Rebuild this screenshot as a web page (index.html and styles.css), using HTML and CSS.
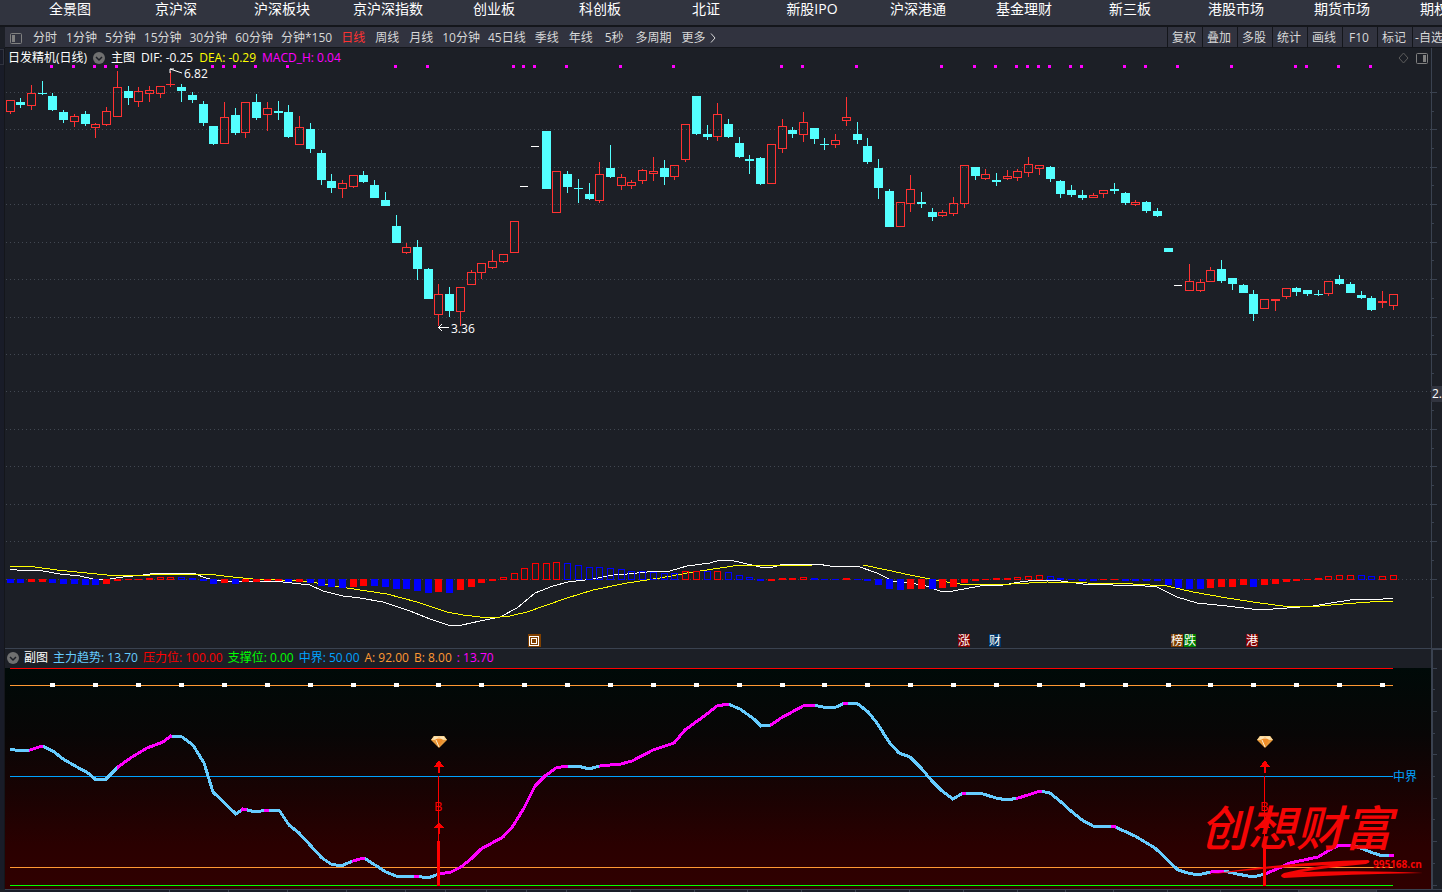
FILE: index.html
```html
<!DOCTYPE html>
<html lang="zh-CN">
<head>
    <meta charset="utf-8">
    <title>日发精机(日线)</title>
    <link rel="stylesheet" href="styles.css">
</head>
<body>
    <nav class="markets">
        <a href="#">全景图</a>
        <a href="#">京沪深</a>
        <a href="#">沪深板块</a>
        <a href="#">京沪深指数</a>
        <a href="#">创业板</a>
        <a href="#">科创板</a>
        <a href="#">北证</a>
        <a href="#">新股IPO</a>
        <a href="#">沪深港通</a>
        <a href="#">基金理财</a>
        <a href="#">新三板</a>
        <a href="#">港股市场</a>
        <a href="#">期货市场</a>
        <a href="#">期权市场</a>
    </nav>

    <div class="toolbar">
        <div class="periods">
            <button class="side-toggle" aria-label="侧栏">
                <svg width="12" height="11"><rect x="0.5" y="0.5" width="11" height="10" rx="1" fill="none" stroke="#808080"/><rect x="2" y="2" width="3" height="7" fill="#808080"/></svg>
            </button>
            <button class="unit">分时</button>
            <button>1分钟</button>
            <button>5分钟</button>
            <button>15分钟</button>
            <button>30分钟</button>
            <button>60分钟</button>
            <button>分钟*150</button>
            <button class="unit active">日线</button>
            <button class="unit">周线</button>
            <button class="unit">月线</button>
            <button>10分钟</button>
            <button>45日线</button>
            <button class="unit">季线</button>
            <button class="unit">年线</button>
            <button class="seconds">5秒</button>
            <button class="unit">多周期</button>
            <button class="unit more">更多
                <svg width="6" height="10"><path d="M1 0.5 L5 5 L1 9.5" fill="none" stroke="#d8d8d8"/></svg>
            </button>
        </div>
        <div class="tools">
            <button>复权</button>
            <button>叠加</button>
            <button>多股</button>
            <button>统计</button>
            <button>画线</button>
            <button>F10</button>
            <button>标记</button>
            <button>-自选</button>
        </div>
    </div>

    <main class="workspace">
        <div class="gutter"><div class="gutter-tab"></div></div>
        <div class="charts">
            <section class="price">
                <div class="legend">
                    <span class="name">日发精机(日线)</span>
                    <button class="fold" aria-label="主图菜单"><svg width="12" height="12"><circle cx="6" cy="6" r="6" fill="#707070"/><path d="M3 5 L6 8 L9 5" fill="none" stroke="#1c1f26" stroke-width="1.5"/></svg></button>
                    <span>主图</span>
                    <span>DIF: -0.25</span>
                    <span class="yellow">DEA: -0.29</span>
                    <span class="magenta">MACD_H: 0.04</span>
                    <span class="corner">
                        <svg width="30" height="12"><path d="M5.500 1 L10 6 L5.500 11 L1 6 Z" fill="none" stroke="#5c5c5c"/><rect x="18.500" y="1.500" width="11" height="10" rx="1" fill="none" stroke="#808080"/><rect x="25" y="3" width="3" height="7" fill="#808080"/></svg>
                    </span>
                </div>
                <svg id="priceChart" class="price-chart"></svg>
            </section>
            <section class="sub">
                <div class="legend">
                    <button class="fold" aria-label="副图菜单"><svg width="12" height="12"><circle cx="6" cy="6" r="6" fill="#707070"/><path d="M3 5 L6 8 L9 5" fill="none" stroke="#1c1f26" stroke-width="1.5"/></svg></button>
                    <span>副图</span>
                    <span class="sky">主力趋势: 13.70</span>
                    <span class="red">压力位: 100.00</span>
                    <span class="green">支撑位: 0.00</span>
                    <span class="blue">中界: 50.00</span>
                    <span class="orange">A: 92.00</span>
                    <span class="orange">B: 8.00</span>
                    <span class="magenta">: 13.70</span>
                </div>
                <svg id="trendChart" class="trend-chart"></svg>
            </section>
        </div>
        <div class="axis">
            <svg id="priceAxis" class="price-axis"></svg>
            <span class="price-tag">2.</span>
            <svg id="trendAxis" class="trend-axis"></svg>
        </div>
    </main>
    <footer class="timeline"><svg id="timeAxis" width="100%" height="3"></svg></footer>

    <script src="chart.js"></script>
</body>
</html>
```
FILE: styles.css
```css
* {
    box-sizing: border-box;
}

body {
    margin: 0;
    background-color: #1c1f26;
    color: #fff;
    font-family: "Open Sans", "Noto Sans CJK SC", sans-serif;
    font-size: 12px;
    line-height: 16px;
    overflow: hidden;
}

button {
    margin: 0;
    padding: 0;
    border: none;
    background: none;
    color: #d8d8d8;
    font: inherit;
    white-space: nowrap;
    cursor: pointer;
}

svg {
    display: block;
}

/* top market tabs */
.markets {
    display: flex;
    height: 27px;
    padding-left: 17px;
    background-color: #31343f;
    border-bottom: 2px solid #14161b;
    overflow: hidden;
}

.markets a {
    flex: 0 0 106px;
    color: #fff;
    font-size: 14px;
    line-height: 18px;
    text-align: center;
    text-decoration: none;
}

/* period toolbar */
.toolbar {
    display: flex;
    justify-content: space-between;
    height: 21px;
    margin-left: 5px;
    background-color: #31333f;
    border-bottom: 1px solid #14161b;
    overflow: hidden;
}

.periods {
    display: flex;
    align-items: center;
    gap: 8px;
    padding-top: 2px;
    padding-left: 5px;
}

.periods .side-toggle {
    margin-right: 2px;
}

.periods .unit {
    padding: 0 1px;
}

.periods .seconds {
    padding: 0 3px;
}

.periods .active {
    color: #ff3232;
}

.more {
    display: flex;
    align-items: center;
    gap: 4px;
}

.tools {
    display: flex;
    flex: 0 0 275px;
    overflow: hidden;
}

.tools button {
    flex: 0 0 35px;
    padding-top: 2px;
    padding-right: 2px;
    border-left: 1px solid #14161b;
}

/* charts */
.workspace {
    display: flex;
}

.gutter {
    flex: 0 0 5px;
    background-color: #191c28;
    border-right: 1px solid #14161b;
}

.gutter-tab {
    height: 16px;
    margin-top: 1px;
    border: 1px solid #31343f;
    border-left: none;
}

.charts {
    flex: 1;
    min-width: 0;
}

.legend {
    display: flex;
    align-items: center;
    gap: 6px;
    height: 16px;
    padding-left: 3px;
    white-space: nowrap;
}

.price .legend {
    padding-top: 3px;
}

.corner {
    margin-left: auto;
    padding-right: 3px;
}

.price-chart {
    width: 100%;
    height: 584px;
}

.sub {
    border-top: 1px solid #3a4250;
}

.sub .legend {
    height: 19px;
    padding-bottom: 2px;
    padding-left: 2px;
    gap: 5px;
}

.trend-chart {
    width: 100%;
    height: 221px;
    background: linear-gradient(#000a08, #080606 30%, #180303 55%, #2a0000 80%, #300000);
}

.axis {
    position: relative;
    flex: 0 0 11px;
    overflow: hidden;
}

.price-axis {
    width: 100%;
    height: 600px;
    border-left: 1px solid #3a4250;
}

.price-tag {
    position: absolute;
    top: 338px;
    left: 0;
    width: 100%;
    padding-left: 1px;
    background-color: #31343f;
}

.trend-axis {
    width: 100%;
    height: 241px;
    border-top: 2px solid #3a4250;
    border-left: 2px solid #3a4250;
}

.timeline {
    margin-left: 5px;
    border-top: 1px solid #3a4250;
    background-color: #191c28;
}

.yellow {
    color: #ffff00;
}

.magenta {
    color: #ff00ff;
}

.sky {
    color: #66ccff;
}

.red {
    color: #ff0000;
}

.green {
    color: #00ff00;
}

.blue {
    color: #00a2ff;
}

.orange {
    color: #ff9933;
}

/* svg text */
.mark {
    fill: #fff;
    font-size: 12px;
}

.mid-label {
    fill: #00a2ff;
    font-size: 12px;
}

.buy {
    fill: #ff0000;
    font-size: 13px;
}

.brand {
    fill: #f50505;
    font-family: "Noto Sans CJK SC", sans-serif;
    font-size: 48px;
    font-style: italic;
    font-weight: 500;
}

.site {
    fill: #f50505;
    font-size: 10px;
    font-weight: bold;
}
```
FILE: chart.js
```js
// one row per day: kind (r up, c down, w flat), high, top, bottom, low
const candles = `r 100 100 112 114|c 98 102 105 108|r 85 93 106 110|c 81 93 94 95|c 93 96 110 111
c 110 112 120 123|r 114 116 122 127|c 111 114 124 126|r 123 124 128 138|r 107 111 125 126
r 71 87 117 117|c 86 91 98 105|r 87 91 102 107|r 86 90 94 102|r 86 86 94 98
r 71 84 85 87|c 84 87 91 102|c 92 95 100 103|c 101 104 123 126|c 126 126 144 145
r 102 117 144 144|c 108 115 133 135|r 102 102 133 138|c 94 102 118 120|r 102 108 115 131
c 101 111 113 120|c 105 112 137 138|r 116 127 145 145|c 123 129 149 153|c 150 153 180 185
c 174 181 188 193|r 180 183 189 198|r 175 175 187 188|c 171 175 182 183|c 180 185 198 198
c 192 200 206 206|c 215 226 243 243|r 243 247 253 254|c 240 247 269 280|c 268 269 299 299
r 284 294 315 326|c 287 294 311 317|r 287 287 312 326|r 270 272 285 285|r 263 263 273 279
r 250 261 268 269|r 254 254 262 263|r 221 221 253 253|w 186 186 187 187|w 146 146 147 147
c 131 131 189 189|r 171 171 213 213|c 171 174 187 193|c 179 188 189 203|c 183 194 199 200
r 162 174 201 203|c 145 168 177 178|r 174 177 186 190|r 180 182 186 189|r 169 170 181 184
r 157 171 174 181|c 160 168 177 185|r 165 165 177 180|r 124 124 160 162|c 96 96 134 135
c 125 134 137 140|r 103 114 137 141|c 119 124 137 138|c 137 143 157 158|c 155 159 161 174
c 157 158 184 185|r 144 144 184 184|r 119 126 149 153|c 127 130 134 138|r 112 122 135 142
c 128 128 139 144|c 138 144 145 150|r 134 140 145 148|r 97 117 121 126|c 122 134 140 144
c 138 146 162 164|c 159 168 188 199|c 189 191 227 227|r 202 202 227 227|r 175 189 204 212
c 192 202 204 208|c 208 212 217 221|r 210 212 216 217|r 197 203 214 216|r 165 165 204 208
c 167 167 176 180|r 169 174 179 180|c 173 180 182 186|r 170 176 179 180|r 169 171 178 181
r 157 164 173 177|r 165 165 169 175|c 166 167 179 182|c 180 181 194 198|c 185 190 195 197
c 190 195 198 200|r 193 195 198 198|r 190 190 194 198|c 183 189 191 194|c 192 193 203 205
r 200 202 205 206|c 201 202 211 213|c 208 211 216 217|c 248 248 252 252|w 285 285 286 286
r 264 281 291 291|r 279 282 291 292|r 267 270 282 282|c 260 269 281 283|c 278 278 284 290
c 284 285 293 293|c 290 294 314 321|r 299 299 309 309|r 299 299 301 311|r 288 288 297 299
c 287 288 292 296|c 290 290 294 296|c 290 294 295 296|r 281 281 294 296|c 275 279 284 285
c 282 284 293 293|c 291 295 298 299|c 296 298 310 311|r 291 301 303 308|r 294 294 306 310`
    .split(/[|\n]/).map(row => row.split(" "));

// histogram, height in px above (+) or below (-) zero
const hist = `b-4 b-4 r-3 r-3 b-4 b-5 b-5 b-6 b-6 r-5 r-2 r-1 r-1 r2 r3 r3 b3 b2 b-2 b-5 r-4 b-5 r-3 r-3 r-2 r-2 b-3 r-3 b-4 b-7
b-8 b-9 r-8 r-7 b-7 b-8 b-10 b-10 b-12 b-14 r-13 b-14 r-11 r-8 r-4 r-2 r3 r7 r12 r17 r17 r18 b17 b15 b13 b13 b12 b11 b9 b9
b8 b7 b7 r9 r9 b9 r9 b8 b5 b3 b-2 r-2 r2 r2 r3 b2 b-1 b-1 r2 b-1 b-2 b-6 b-10 b-11 r-10 r-10 b-10 r-9 r-8 r-4
r-2 r-1 r2 r2 r3 r4 r5 b4 b2 b-1 b-2 b-2 r-1 r-1 b-2 b-2 b-2 b-2 b-6 b-9 b-10 b-10 r-9 r-8 r-8 r-6 b-8 r-6 r-5 r-3
r-2 r-1 r2 r4 r5 r5 b5 b4 r4 r5`.split(/\s+/);

const signalDays = [4, 6, 8, 9, 10, 19, 20, 21, 23, 26, 36, 39, 47, 48, 49, 52, 57, 62, 72, 74, 79, 87,
    90, 92, 94, 95, 96, 97, 99, 100, 104, 106, 109, 114, 120, 121, 124, 127];

const dif = "10,569 17,570 43,571 60,574 80,576 93,579 110,579 123,577 143,575 157,573 193,573 203,577 213,580 233,582 247,581 283,582 310,585 323,591 343,596 360,598 383,602 410,611 430,619 448,625 462,625 480,621 500,617 517,608 535,593 553,586 568,582 593,579 613,575 627,574 647,572 670,571 687,566 710,563 720,560 730,560 743,563 760,567 773,567 780,565 800,564 817,564 830,566 857,566 877,573 893,581 923,585 940,591 953,591 980,586 1003,585 1020,582 1037,580 1053,580 1083,584 1113,585 1133,585 1157,587 1177,597 1197,603 1227,606 1260,610 1287,608 1313,606 1337,602 1357,599 1373,600 1393,598";
const dea = "10,566 27,566 57,570 107,575 150,575 167,574 207,574 233,577 253,579 300,581 317,583 347,588 387,594 417,602 447,612 463,615 480,617 500,617 510,616 527,612 567,598 593,590 627,583 660,578 693,572 727,567 740,565 763,566 813,565 863,565 887,570 910,575 940,581 960,584 993,585 1047,582 1087,583 1133,584 1167,586 1193,592 1227,598 1260,603 1283,606 1320,606 1343,604 1370,602 1393,601";
const trend = "10,749 20,751 30,750 42,746 53,751 63,759 77,767 88,773 95,779 106,779 118,767 132,757 147,748 163,742 171,736 182,737 193,745 204,763 213,792 236,814 243,809 256,812 266,810 279,810 289,825 299,833 322,858 331,864 341,866 353,861 364,858 375,865 386,872 396,876 406,877 416,876 428,878 439,874 451,872 461,867 472,858 481,849 492,843 503,837 513,826 524,808 535,786 545,776 556,768 566,766 578,766 589,769 600,766 621,764 632,761 653,750 674,743 685,730 696,722 707,714 717,706 728,704 740,709 754,719 761,726 771,725 781,718 792,712 803,706 813,705 823,707 834,708 845,703 858,704 868,712 877,723 889,742 899,753 910,757 921,768 932,781 942,791 953,799 963,793 980,793 996,798 1007,800 1018,798 1028,795 1040,791 1050,793 1061,802 1071,811 1082,820 1093,826 1104,827 1113,826 1135,836 1155,848 1178,870 1188,873 1198,875 1211,872 1224,871 1237,874 1253,877 1265,874 1277,869 1290,863 1318,857 1333,848 1340,845 1352,845 1363,849 1373,853 1383,856 1394,855";
// x ranges where the trend is rising
const rising = [[29, 43], [117, 172], [241, 247], [264, 269], [352, 365], [414, 419], [439, 568], [599, 729],
    [770, 815], [843, 848], [962, 966], [1016, 1042], [1111, 1116], [1210, 1224], [1265, 1351], [1389, 1396]];

const dayX = i => Math.floor(10.1 + 10.722 * i);
const rect = (x, y, w, h, fill) => `<rect x="${x}" y="${y}" width="${w}" height="${h}" fill="${fill}"/>`;
const box = (x, y, w, h, stroke) => `<rect x="${x + 0.5}" y="${y + 0.5}" width="${w - 1}" height="${h - 1}" fill="none" stroke="${stroke}"/>`;
const line = (points, color, width) => `<polyline points="${points}" fill="none" stroke="${color}" stroke-width="${width}"/>`;

function drawPrice() {
    let out = "";
    for (let i = 0; i < 14; i++) {
        const y = Math.floor(92.3 + i * 37.45) + 0.5;
        out += `<line x1="1" x2="100%" y1="${y - 64}" y2="${y - 64}" stroke="#424852" stroke-dasharray="1 3"/>`;
    }
    out += `<g transform="translate(-5,-64)"><g shape-rendering="crispEdges">`;
    candles.forEach(([kind, ...values], i) => {
        const x = dayX(i);
        const [high, top, bottom, low] = values.map(Number);
        if (kind === "w") {
            out += rect(x - 4, top, 8, 1, "#fff");
        } else if (kind === "c") {
            out += rect(x, high, 1, low - high, "#54ffff") + rect(x - 4, top, 9, bottom - top, "#54ffff");
        } else {
            out += rect(x, high, 1, top - high, "#ff3232") + rect(x, bottom, 1, low - bottom, "#ff3232");
            out += bottom - top < 3 ? rect(x - 4, top, 9, bottom - top, "#ff3232") : box(x - 4, top, 9, bottom - top, "#ff3232");
        }
    });
    signalDays.forEach(i => out += rect(dayX(i) - 2, 65, 3, 3, "#ff00ff"));
    out += line(dif, "#fff", 1) + line(dea, "#ffff00", 1);
    hist.forEach((bar, i) => {
        const color = bar[0] === "r" ? "#ff0000" : "#0000ff";
        const size = Number(bar.slice(1));
        const x = dayX(i) - 3;
        if (size < 0) {
            out += rect(x, 579, 7, -size, color);
        } else if (size < 3) {
            out += rect(x, 580 - size, 7, size, color);
        } else {
            out += box(x, 580 - size, 7, size, color);
        }
    });
    out += `</g>
        <path d="M182 73 L170 69 M170 73 V69 H174" fill="none" stroke="#fff"/>
        <text class="mark" x="184" y="78">6.82</text>
        <path d="M449 327.500 H438 M442 324 L438.500 327.500 L442 331" fill="none" stroke="#fff"/>
        <text class="mark" x="451" y="333">3.36</text>`;
    out += rect(528, 634, 13, 13, "#7f3f00") + box(529, 636, 10, 10, "#fff") + box(531, 638, 6, 6, "#fff");
    [[958, "涨", "#7f0000"], [989, "财", "#003466"], [1171, "榜", "#7f3f00"], [1184, "跌", "#007f00"], [1246, "港", "#7f0000"]]
        .forEach(([x, word, color]) => out += rect(x, 634, 12, 13, color) + `<text class="mark" x="${x}" y="645">${word}</text>`);
    document.getElementById("priceChart").innerHTML = out + "</g>";
}

function signal(x) {
    return `<g transform="translate(${x},0)">
        <g transform="translate(1,0)">
            <path d="M-8 740 L-5 736 H5 L8 740 L0 748 Z" fill="#e89a3c"/>
            <path d="M-8 740 L-5 736 H5 L8 740 Z" fill="#f8d79a"/>
            <path d="M-4 740 L0 737 L4 740 L0 747 Z" fill="#f08c28"/>
            <path d="M-5 738 H5 M-3 740 L0 747" fill="none" stroke="#fff0d0"/>
        </g>
        <g fill="#ff0000" shape-rendering="crispEdges">
            <path d="M1 760 L6 767 H-4 Z"/><rect x="0" y="767" width="2" height="6"/>
            <rect x="0" y="776" width="1" height="66"/>
            <path d="M1 822 L6 828 H-4 Z"/><rect x="0" y="828" width="2" height="6"/>
            <rect x="-1" y="841" width="3" height="45"/>
        </g>
        <text class="buy" x="-4" y="811">B</text>
    </g>`;
}

function drawTrend() {
    let out = `<g transform="translate(-5,-668)"><g shape-rendering="crispEdges">`;
    out += rect(10, 668, 1383, 1, "#ff0000") + rect(10, 685, 1383, 1, "#ff9933") + rect(10, 776, 1383, 1, "#00a2ff");
    out += rect(10, 867, 1383, 1, "#ff9933") + rect(10, 885, 1383, 1, "#00ff00");
    for (let i = 4; i < 130; i += 4) {
        out += rect(dayX(i) - 2, 683, 5, 4, "#fff");
    }
    out += `<clipPath id="rising">${rising.map(([a, b]) => rect(a, 668, b - a, 220, "#fff")).join("")}</clipPath>`;
    out += line(trend, "#66ccff", 3) + `<g clip-path="url(#rising)">${line(trend, "#ff00ff", 3)}</g></g>`;
    out += `<text class="mid-label" x="1393" y="781">中界</text>` + signal(438) + signal(1264);
    out += `<text class="brand" x="1200" y="846">创想财富</text>
        <path d="M1205 875 Q1285 862 1368 860 Q1372 862 1366 864 Q1330 867 1302 872 Q1370 870 1423 873 Q1350 874 1284 878 Q1278 876 1284 873 Q1310 867 1330 865 Q1270 867 1205 875 Z" fill="#f50505"/>
        <text class="site" x="1373" y="868">995168.cn</text>`;
    document.getElementById("trendChart").innerHTML = out + "</g>";
}

function drawAxes() {
    let price = "", sub = "", time = "";
    for (let i = 0; i < 28; i++) {
        price += rect(0, Math.floor(44.3 + i * 18.725), i % 2 ? 2 : 5, 1, "#3a4250");
    }
    for (let i = 0; i < 11; i++) {
        sub += rect(0, Math.floor(18 + i * 21.7), i % 2 ? 2 : 4, 1, "#3a4250");
    }
    [169, 228, 287, 346, 405, 445, 486, 526, 566, 630, 694, 747, 801, 855, 909, 963, 1017, 1065, 1113, 1167, 1220, 1298, 1376]
        .forEach(x => time += rect(x - 5, 0, 1, 3, "#3a4250"));
    document.getElementById("priceAxis").innerHTML = price;
    document.getElementById("trendAxis").innerHTML = sub;
    document.getElementById("timeAxis").innerHTML = rect(1293, 0, 78, 3, "#31343f") + time;
}

drawPrice();
drawTrend();
drawAxes();
```
